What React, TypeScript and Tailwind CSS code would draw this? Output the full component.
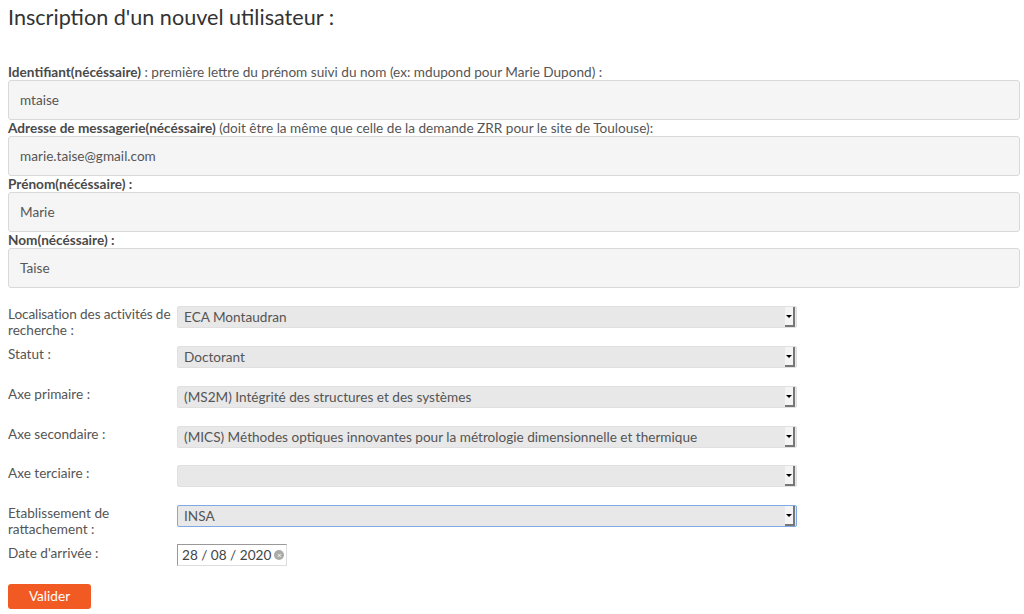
import React from 'react'

const font = { fontFamily: 'Lato, "Open Sans", sans-serif' }

function TextField({ label, note, value }: { label: string; note?: string; value: string }) {
  return (
    <div>
      <div className="h-[16px] leading-[16px] text-[13.6px] text-[#555] whitespace-nowrap">
        <span className="font-bold text-[#4a4a4a]">{label}</span>
        {note}
      </div>
      <div className="h-[40px] flex items-center px-[11px] bg-[#f5f5f5] border border-[#d9d9d9] rounded-[3px] text-[13.6px] text-[#555]">
        {value}
      </div>
    </div>
  )
}

function SelectRow({
  label,
  value,
  focused,
  tight,
}: {
  label: React.ReactNode
  value: string
  focused?: boolean
  tight?: boolean
}) {
  return (
    <div className={(tight ? 'h-[39px]' : 'h-[40px]') + ' flex items-start'}>
      <div className="w-[169px] shrink-0 text-[13.6px] leading-[16px] text-[#555]">{label}</div>
      <div
        className={
          'w-[620px] h-[22px] flex items-center bg-[#e8e8e8] rounded-[2px] border ' +
          (focused ? 'border-[#7fa9e6]' : 'border-[#e0e0e0]')
        }
      >
        <span className="flex-1 pl-[6px] text-[13.6px] text-[#555] truncate">{value}</span>
        <div className="w-[10px] h-[20px] mr-[1px] bg-[#f4f4f4] border-r-2 border-b-2 border-[#777] flex items-center justify-center">
          <div className="w-0 h-0 border-l-[3px] border-r-[3px] border-t-[3px] border-l-transparent border-r-transparent border-t-black" />
        </div>
      </div>
    </div>
  )
}

export default function App() {
  return (
    <div className="bg-white w-[1024px] h-[614px] overflow-hidden px-[8px]" style={font}>
      <h1 className="text-[21.6px] leading-[24px] pt-[5px] text-[#333]">Inscription d'un nouvel utilisateur :</h1>
      <div className="mt-[35px] w-[1012px]">
        <TextField
          label="Identifiant(nécéssaire)"
          note=" : première lettre du prénom suivi du nom (ex: mdupond pour Marie Dupond) :"
          value="mtaise"
        />
        <TextField
          label="Adresse de messagerie(nécéssaire)"
          note=" (doit être la même que celle de la demande ZRR pour le site de Toulouse):"
          value="marie.taise@gmail.com"
        />
        <TextField label="Prénom(nécéssaire) :" value="Marie" />
        <TextField label="Nom(nécéssaire) :" value="Taise" />
      </div>
      <div className="mt-[18px]">
        <SelectRow
          label={
            <>
              <span className="whitespace-nowrap tracking-[-0.1px]">Localisation des activités de</span>
              <br />
              recherche :
            </>
          }
          value="ECA Montaudran"
        />
        <SelectRow label="Statut :" value="Doctorant" />
        <SelectRow label="Axe primaire :" value="(MS2M) Intégrité des structures et des systèmes" />
        <SelectRow
          label="Axe secondaire :"
          value="(MICS) Méthodes optiques innovantes pour la métrologie dimensionnelle et thermique"
          tight
        />
        <SelectRow label="Axe terciaire :" value="" />
        <SelectRow label="Etablissement de rattachement :" value="INSA" focused tight />
        <div className="h-[40px] flex items-start">
          <div className="w-[169px] shrink-0 text-[13.6px] leading-[16px] pt-[1px] text-[#555]">Date d'arrivée :</div>
          <div className="w-[110px] h-[22px] flex items-center bg-white border border-[#999] border-r-[#ddd] border-b-[#ddd] pl-[4px] text-[13.6px] text-[#444]">
            <span>28 / 08 / 2020</span>
            <span className="ml-[3px] w-[10px] h-[10px] rounded-full bg-[#aaa] flex items-center justify-center text-white text-[8px] leading-none">
              ×
            </span>
          </div>
        </div>
        <button className="block w-[83px] h-[25px] bg-[#f15a22] text-white text-[13.6px] rounded-[3px]">Valider</button>
      </div>
    </div>
  )
}
